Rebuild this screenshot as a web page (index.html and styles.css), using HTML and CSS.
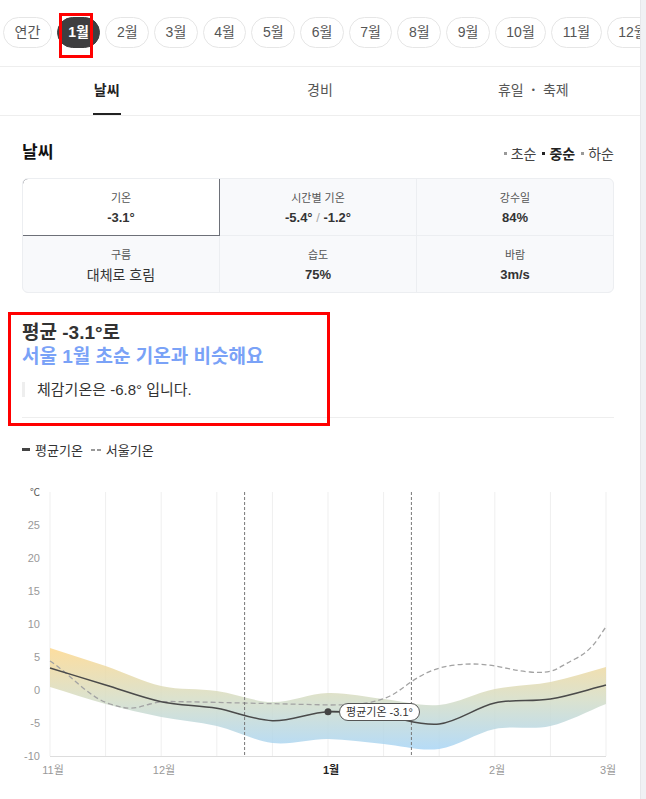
FILE: index.html
```html
<!DOCTYPE html>
<html lang="ko">
  <head>
    <meta charset="UTF-8" />
    <title>여행 날씨 - 1월</title>
    <link rel="stylesheet" href="styles.css">
  </head>
  <body>
    <div class="page">
      <!-- 월 선택 -->
      <nav class="months">
        <a href="#" class="pill">연간</a>
        <a href="#" class="pill pill-on">1월</a>
        <a href="#" class="pill">2월</a>
        <a href="#" class="pill">3월</a>
        <a href="#" class="pill">4월</a>
        <a href="#" class="pill">5월</a>
        <a href="#" class="pill">6월</a>
        <a href="#" class="pill">7월</a>
        <a href="#" class="pill">8월</a>
        <a href="#" class="pill">9월</a>
        <a href="#" class="pill">10월</a>
        <a href="#" class="pill">11월</a>
        <a href="#" class="pill">12월</a>
      </nav>

      <!-- 탭 -->
      <ul class="tabs">
        <li class="tab tab-on"><span>날씨</span></li>
        <li class="tab"><span>경비</span></li>
        <li class="tab"><span>휴일<i class="dot">•</i>축제</span></li>
      </ul>

      <section class="weather">
        <div class="head">
          <h2>날씨</h2>
          <ul class="period">
            <li>초순</li>
            <li class="period-on">중순</li>
            <li>하순</li>
          </ul>
        </div>

        <!-- 요약표 -->
        <div class="stats">
          <div class="cell cell-on">
            <p class="label">기온</p>
            <p class="value">-3.1°</p>
          </div>
          <div class="cell">
            <p class="label">시간별 기온</p>
            <p class="value">-5.4° <span class="slash">/</span> -1.2°</p>
          </div>
          <div class="cell">
            <p class="label">강수일</p>
            <p class="value">84%</p>
          </div>
          <div class="cell">
            <p class="label">구름</p>
            <p class="value value-text">대체로 흐림</p>
          </div>
          <div class="cell">
            <p class="label">습도</p>
            <p class="value">75%</p>
          </div>
          <div class="cell">
            <p class="label">바람</p>
            <p class="value">3m/s</p>
          </div>
        </div>

        <!-- 요약문 -->
        <div class="summary">
          <p class="title">평균 -3.1°로</p>
          <p class="title title-blue">서울 1월 초순 기온과 비슷해요</p>
          <p class="feel">체감기온은 -6.8° 입니다.</p>
        </div>
        <div class="divider"></div>

        <ul class="legend">
          <li><i class="mark mark-solid"></i>평균기온</li>
          <li><i class="mark mark-dash"></i>서울기온</li>
        </ul>
      </section>

      <!-- 기온 그래프 -->
      <div class="chart">
        <svg width="640" height="329" viewBox="0 470 640 329">
          <defs>
            <linearGradient id="band" gradientUnits="userSpaceOnUse" x1="0" y1="650" x2="0" y2="750">
              <stop offset="0" stop-color="#fcd88f" />
              <stop offset="0.5" stop-color="#d5ddc6" />
              <stop offset="1" stop-color="#a9d5f5" />
            </linearGradient>
          </defs>

          <!-- 세로 격자 -->
          <g class="grid">
            <line x1="50" y1="493" x2="50" y2="757" />
            <line x1="105.6" y1="493" x2="105.6" y2="757" />
            <line x1="161.2" y1="493" x2="161.2" y2="757" />
            <line x1="216.8" y1="493" x2="216.8" y2="757" />
            <line x1="272.4" y1="493" x2="272.4" y2="757" />
            <line x1="328" y1="493" x2="328" y2="757" />
            <line x1="383.6" y1="493" x2="383.6" y2="757" />
            <line x1="439.2" y1="493" x2="439.2" y2="757" />
            <line x1="494.8" y1="493" x2="494.8" y2="757" />
            <line x1="550.4" y1="493" x2="550.4" y2="757" />
            <line x1="606" y1="493" x2="606" y2="757" />
          </g>
          <line class="axis" x1="50" y1="757.5" x2="606" y2="757.5" />

          <!-- y축 -->
          <g class="ylabel">
            <text class="unit" x="40" y="497">℃</text>
            <text x="40" y="530">25</text>
            <text x="40" y="563">20</text>
            <text x="40" y="596">15</text>
            <text x="40" y="629">10</text>
            <text x="40" y="662">5</text>
            <text x="40" y="695">0</text>
            <text x="40" y="728">-5</text>
            <text x="40" y="761">-10</text>
          </g>

          <!-- 최저~최고 범위 -->
          <path fill="url(#band)" opacity="0.85"
            d="M50,649 C68.5,655 87.1,660.7 105.6,667 C124.1,673.3 142.7,682.8 161.2,687 C179.7,691.2 198.3,689.3 216.8,692 C235.3,694.7 253.9,702.7 272.4,703 C290.9,703.3 309.5,694.5 328,694 C346.5,693.5 365.1,698 383.6,700 C402.1,702 420.7,707.7 439.2,706 C457.7,704.3 476.3,693.8 494.8,690 C513.3,686.2 531.9,686.7 550.4,683 C568.9,679.3 587.5,673 606,668 L606,705 C587.5,712.3 568.9,722.8 550.4,727 C531.9,731.2 513.3,726.2 494.8,730 C476.3,733.8 457.7,747.5 439.2,750 C420.7,752.5 402.1,746.7 383.6,745 C365.1,743.3 346.5,740.2 328,740 C309.5,739.8 290.9,746.2 272.4,744 C253.9,741.8 235.3,731.3 216.8,727 C198.3,722.7 179.7,721.7 161.2,718 C142.7,714.3 124.1,710 105.6,705 C87.1,700 68.5,693.7 50,688 Z" />

          <!-- 서울기온 -->
          <path class="seoul"
            d="M50,662 C70,675 88,698 110,705 S135,709 150,705 S175,703 200,703 L330,706 C360,706 375,704 390,697 S420,670 455,666 S505,671 530,673 S555,670 575,660 S600,635 606,628" />

          <!-- 1월 구간 -->
          <line class="range" x1="244.6" y1="493" x2="244.6" y2="757" />
          <line class="range" x1="411.4" y1="493" x2="411.4" y2="757" />

          <!-- 평균기온 -->
          <path class="mean"
            d="M50,669 C68.5,674.7 87.1,680.4 105.6,686 C124.1,691.6 142.7,698.8 161.2,702.7 C179.7,706.6 198.3,706.1 216.8,709.3 C235.3,712.5 253.9,721.1 272.4,721.7 C290.9,722.3 309.5,713.5 328,712.7 C346.5,711.9 365.1,715 383.6,717 C402.1,719 420.7,727.2 439.2,725 C457.7,722.8 476.3,708.2 494.8,704 C513.3,699.8 531.9,703 550.4,700 C568.9,697 587.5,690.7 606,686" />

          <!-- 툴팁 -->
          <line class="tip-line" x1="328" y1="712.7" x2="340" y2="712.7" />
          <circle cx="328" cy="712.7" r="3.5" fill="#444" />
          <rect class="tip" x="339.5" y="704.5" width="80" height="17" rx="8.5" />
          <text class="tip-text" x="379.5" y="716.5">평균기온 -3.1°</text>

          <!-- x축 -->
          <g class="xlabel">
            <text x="53" y="775" text-anchor="start">11월</text>
            <text x="164" y="775">12월</text>
            <text class="xlabel-on" x="331" y="775">1월</text>
            <text x="497" y="775">2월</text>
            <text x="608" y="775" text-anchor="end">3월</text>
          </g>
        </svg>
      </div>
    </div>
  </body>
</html>
```

FILE: styles.css
```css
/* 초기화 */
html,
body,
ul,
p,
h2 {
  margin: 0;
  padding: 0;
}
ul {
  list-style: none;
}
body {
  background-color: #f0f1f4;
  font-family: "Liberation Sans", "Noto Sans CJK KR", sans-serif;
  color: #333;
}
a {
  text-decoration: none;
}
i {
  font-style: normal;
}

/* 페이지 박스 */
.page {
  width: 640px;
  min-height: 799px;
  overflow: hidden;
  background-color: #fff;
  border-right: 1px solid #e6e7ea;
}

/* 월 선택 */
.months {
  display: flex;
  gap: 5px;
  padding: 17px 0 18px 3px;
  border-bottom: 1px solid #eee;
  white-space: nowrap;
}
.pill {
  position: relative;
  flex: none;
  box-sizing: border-box;
  height: 31px;
  padding: 0 10.5px;
  border: 1px solid #e6e6e6;
  border-radius: 16px;
  font-size: 14px;
  line-height: 29px;
  color: #555;
}
.pill-on {
  background-color: #3e3e40;
  border-color: #3e3e40;
  color: #fff;
  font-weight: bold;
}
/* 캡처에 그려진 빨간 표시 */
.pill-on::after {
  content: '';
  position: absolute;
  top: -5px;
  left: 1px;
  width: 28px;
  height: 39px;
  border: 3px solid #f00;
}

/* 탭 */
.tabs {
  display: flex;
  border-bottom: 1px solid #eee;
}
.tab {
  flex: 1;
  display: flex;
  justify-content: center;
  height: 48px;
  font-size: 14px;
  color: #555;
}
.tab span {
  box-sizing: border-box;
  padding-top: 12px;
  height: 48px;
}
.tab-on span {
  padding: 12px 1px 0;
  border-bottom: 2px solid #222;
  color: #222;
  font-weight: bold;
}
.dot {
  margin: 0 8px;
  font-size: 9px;
  vertical-align: 2px;
}

/* 날씨 */
.weather {
  padding: 25px 26px 0 22px;
}
.head {
  display: flex;
  justify-content: space-between;
  align-items: center;
}
.head h2 {
  font-size: 17px;
  line-height: 24px;
  color: #111;
}
.period {
  display: flex;
  gap: 6px;
  font-size: 14px;
  color: #444;
}
.period li::before {
  content: '';
  display: inline-block;
  width: 3px;
  height: 3px;
  margin-right: 4px;
  vertical-align: 4px;
  background-color: #999;
}
.period-on {
  font-weight: bold;
  color: #222;
}
.period-on::before {
  background-color: #222 !important;
}

/* 요약표 */
.stats {
  display: grid;
  grid-template-columns: repeat(3, 1fr);
  grid-auto-rows: 56px;
  gap: 1px;
  margin-top: 13px;
  overflow: hidden;
  border: 1px solid #eceef1;
  border-radius: 6px;
  background-color: #eceef1;
}
.cell {
  padding-top: 11px;
  background-color: #f8f9fb;
  text-align: center;
}
.cell-on {
  background-color: #fff;
  box-shadow: 0 0 0 1px #6d7078;
  border-radius: 5px 0 0 0;
}
.label {
  font-size: 11px;
  line-height: 16px;
  color: #555;
}
.value {
  margin-top: 3px;
  font-size: 13px;
  line-height: 18px;
  font-weight: bold;
  color: #333;
}
.value-text {
  font-size: 14px;
  font-weight: normal;
}
.slash {
  font-weight: normal;
  color: #aaa;
}

/* 요약문 */
.summary {
  position: relative;
  margin-top: 28px;
}
.summary::after {
  content: '';
  position: absolute;
  top: -9px;
  left: -14px;
  width: 316px;
  height: 108px;
  border: 3px solid #f00;
}
.title {
  font-size: 19px;
  line-height: 24px;
  font-weight: bold;
  color: #333;
}
.title-blue {
  color: #7aa2f7;
}
.feel {
  margin-top: 13px;
  padding-left: 12px;
  border-left: 3px solid #eee;
  font-size: 15px;
  line-height: 15px;
  color: #333;
}
.divider {
  margin-top: 20px;
  border-top: 1px solid #eee;
}

/* 범례 */
.legend {
  display: flex;
  gap: 8px;
  margin-top: 24px;
  font-size: 13px;
  line-height: 18px;
  color: #333;
}
.mark {
  display: inline-block;
  width: 8px;
  margin-right: 5px;
  vertical-align: 4px;
}
.mark-solid {
  height: 3px;
  background-color: #444;
}
.mark-dash {
  width: 10px;
  height: 2px;
  background: repeating-linear-gradient(90deg, #999 0 4px, transparent 4px 6px);
}

/* 그래프 */
.chart {
  margin-top: 9px;
}
.chart svg {
  display: block;
}
.grid line {
  stroke: #efefef;
  stroke-width: 1;
}
.axis {
  stroke: #ddd;
  stroke-width: 1;
}
.ylabel text {
  text-anchor: end;
  font-size: 11px;
  fill: #999;
}
.ylabel .unit {
  font-size: 10px;
  fill: #555;
}
.seoul {
  fill: none;
  stroke: #a3a3a3;
  stroke-width: 1.3;
  stroke-dasharray: 5 3;
}
.range {
  stroke: #777;
  stroke-width: 1;
  stroke-dasharray: 3 2;
}
.mean {
  fill: none;
  stroke: #4a4a4a;
  stroke-width: 1.5;
}
.tip-line {
  stroke: #444;
  stroke-width: 1.5;
}
.tip {
  fill: #fff;
  stroke: #555;
  stroke-width: 1;
}
.tip-text {
  text-anchor: middle;
  font-size: 11px;
  fill: #333;
}
.xlabel text {
  text-anchor: middle;
  font-size: 11px;
  fill: #999;
}
.xlabel .xlabel-on {
  font-weight: bold;
  fill: #222;
}
```
